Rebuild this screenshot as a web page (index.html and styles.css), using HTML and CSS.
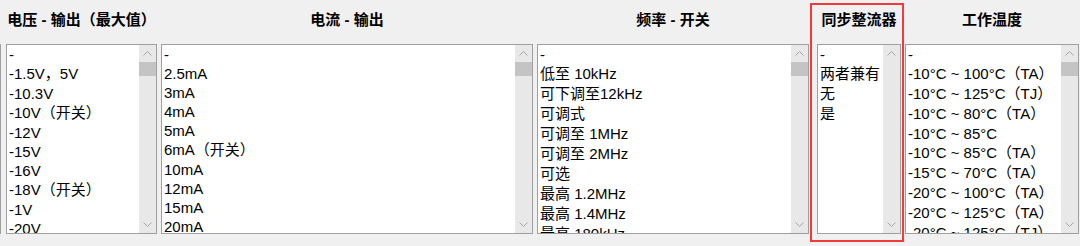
FILE: index.html
```html
<!DOCTYPE html>
<html lang="zh-CN">

<head>
    <meta charset="UTF-8">
    <meta name="viewport" content="width=device-width, initial-scale=1.0">
    <title>参数筛选</title>
    <link rel="stylesheet" href="styles.css">
</head>

<body>

    <div class="filters">
        <div class="edge"></div>

        <!-- 电压 -->
        <div class="filter col-voltage">
            <h3 class="filter-title">电压 - 输出（最大值）</h3>
            <div class="listbox">
                <ul class="options">
                    <li>-</li>
                    <li class="cjk">-1.5V，5V</li>
                    <li>-10.3V</li>
                    <li class="cjk">-10V（开关）</li>
                    <li>-12V</li>
                    <li>-15V</li>
                    <li>-16V</li>
                    <li class="cjk">-18V（开关）</li>
                    <li>-1V</li>
                    <li>-20V</li>
                </ul>
                <div class="scrollbar">
                    <span class="arrow"><svg width="17" height="17" viewBox="0 0 17 17"><polyline points="4.5,10.5 8.5,6.5 12.5,10.5" /></svg></span>
                    <span class="thumb"></span>
                    <span class="track"></span>
                    <span class="arrow"><svg width="17" height="17" viewBox="0 0 17 17"><polyline points="4.5,6.5 8.5,10.5 12.5,6.5" /></svg></span>
                </div>
            </div>
        </div>

        <!-- 电流 -->
        <div class="filter col-current">
            <h3 class="filter-title">电流 - 输出</h3>
            <div class="listbox">
                <ul class="options">
                    <li>-</li>
                    <li>2.5mA</li>
                    <li>3mA</li>
                    <li>4mA</li>
                    <li>5mA</li>
                    <li class="cjk">6mA（开关）</li>
                    <li>10mA</li>
                    <li>12mA</li>
                    <li>15mA</li>
                    <li>20mA</li>
                </ul>
                <div class="scrollbar">
                    <span class="arrow"><svg width="17" height="17" viewBox="0 0 17 17"><polyline points="4.5,10.5 8.5,6.5 12.5,10.5" /></svg></span>
                    <span class="thumb"></span>
                    <span class="track"></span>
                    <span class="arrow"><svg width="17" height="17" viewBox="0 0 17 17"><polyline points="4.5,6.5 8.5,10.5 12.5,6.5" /></svg></span>
                </div>
            </div>
        </div>

        <!-- 频率 -->
        <div class="filter col-freq">
            <h3 class="filter-title">频率 - 开关</h3>
            <div class="listbox">
                <ul class="options">
                    <li>-</li>
                    <li class="cjk">低至 10kHz</li>
                    <li class="cjk">可下调至12kHz</li>
                    <li class="cjk">可调式</li>
                    <li class="cjk">可调至 1MHz</li>
                    <li class="cjk">可调至 2MHz</li>
                    <li class="cjk">可选</li>
                    <li class="cjk">最高 1.2MHz</li>
                    <li class="cjk">最高 1.4MHz</li>
                    <li class="cjk">最高 180kHz</li>
                </ul>
                <div class="scrollbar">
                    <span class="arrow"><svg width="17" height="17" viewBox="0 0 17 17"><polyline points="4.5,10.5 8.5,6.5 12.5,10.5" /></svg></span>
                    <span class="thumb"></span>
                    <span class="track"></span>
                    <span class="arrow"><svg width="17" height="17" viewBox="0 0 17 17"><polyline points="4.5,6.5 8.5,10.5 12.5,6.5" /></svg></span>
                </div>
            </div>
        </div>

        <!-- 同步整流器 (highlighted) -->
        <div class="filter col-sync highlight">
            <h3 class="filter-title">同步整流器</h3>
            <div class="listbox">
                <ul class="options">
                    <li>-</li>
                    <li class="cjk">两者兼有</li>
                    <li class="cjk">无</li>
                    <li class="cjk">是</li>
                </ul>
                <div class="scrollbar">
                    <span class="arrow"><svg width="17" height="17" viewBox="0 0 17 17"><polyline points="4.5,10.5 8.5,6.5 12.5,10.5" /></svg></span>
                    <span class="track"></span>
                    <span class="arrow"><svg width="17" height="17" viewBox="0 0 17 17"><polyline points="4.5,6.5 8.5,10.5 12.5,6.5" /></svg></span>
                </div>
            </div>
        </div>

        <!-- 工作温度 -->
        <div class="filter col-temp">
            <h3 class="filter-title">工作温度</h3>
            <div class="listbox">
                <ul class="options">
                    <li>-</li>
                    <li class="cjk">-10°C ~ 100°C（TA）</li>
                    <li class="cjk">-10°C ~ 125°C（TJ）</li>
                    <li class="cjk">-10°C ~ 80°C（TA）</li>
                    <li>-10°C ~ 85°C</li>
                    <li class="cjk">-10°C ~ 85°C（TA）</li>
                    <li class="cjk">-15°C ~ 70°C（TA）</li>
                    <li class="cjk">-20°C ~ 100°C（TA）</li>
                    <li class="cjk">-20°C ~ 125°C（TA）</li>
                    <li class="cjk">-20°C ~ 125°C（TJ）</li>
                </ul>
                <div class="scrollbar">
                    <span class="arrow"><svg width="17" height="17" viewBox="0 0 17 17"><polyline points="4.5,10.5 8.5,6.5 12.5,10.5" /></svg></span>
                    <span class="thumb"></span>
                    <span class="track"></span>
                    <span class="arrow"><svg width="17" height="17" viewBox="0 0 17 17"><polyline points="4.5,6.5 8.5,10.5 12.5,6.5" /></svg></span>
                </div>
            </div>
        </div>
    </div>

</body>

</html>
```

FILE: styles.css
```css
/* Global styles */
* {
    margin: 0;
    padding: 0;
    box-sizing: border-box;
}

body {
    font-family: 'Liberation Sans', 'Noto Sans CJK SC', sans-serif;
    background: #f0f0f0;
    color: #000;
    width: 1080px;
    height: 246px;
    overflow: hidden;
}

/* Row of filters */
.filters {
    display: flex;
    align-items: flex-start;
}

.edge {
    width: 1px;
    height: 190px;
    margin-top: 44px;
    margin-right: 5px;
    background: #a0a0a0;
}

.filter {
    display: flex;
    flex-direction: column;
    flex-shrink: 0;
}

.col-voltage {
    width: 151px;
    margin-right: 4px;
}

.col-current {
    width: 372px;
    margin-right: 4px;
}

.col-freq {
    width: 272px;
    margin-right: 1px;
}

.col-sync {
    width: 94px;
    margin-right: 1px;
}

.col-temp {
    width: 174px;
}

/* Column heading */
.filter-title {
    height: 44px;
    line-height: 40px;
    font-size: 15px;
    font-weight: bold;
    text-align: center;
    white-space: nowrap;
}

/* Red highlight frame */
.highlight {
    margin-top: 3px;
    border: 2px solid #f23a3a;
    padding: 0 1px 6px 5px;
}

.highlight .filter-title {
    height: 39px;
    line-height: 30px;
}

/* List box */
.listbox {
    display: flex;
    height: 190px;
    background: #fff;
    border: 1px solid #a0a0a0;
    overflow: hidden;
}

.options {
    flex: 1;
    list-style: none;
    padding-left: 2px;
    font-size: 15px;
    overflow: hidden;
    white-space: nowrap;
}

.options li {
    height: 19px;
    line-height: 19px;
}

.options li.cjk {
    height: 20px;
    line-height: 20px;
}

/* Scrollbar */
.scrollbar {
    width: 17px;
    display: flex;
    flex-direction: column;
    background: #e8e8e8;
}

.arrow {
    height: 17px;
    display: block;
}

.arrow svg {
    display: block;
}

.arrow polyline {
    fill: none;
    stroke: #a6a6a6;
    stroke-width: 1;
}

.thumb {
    height: 14px;
    background: #c4c4c4;
}

.track {
    flex: 1;
}
```
